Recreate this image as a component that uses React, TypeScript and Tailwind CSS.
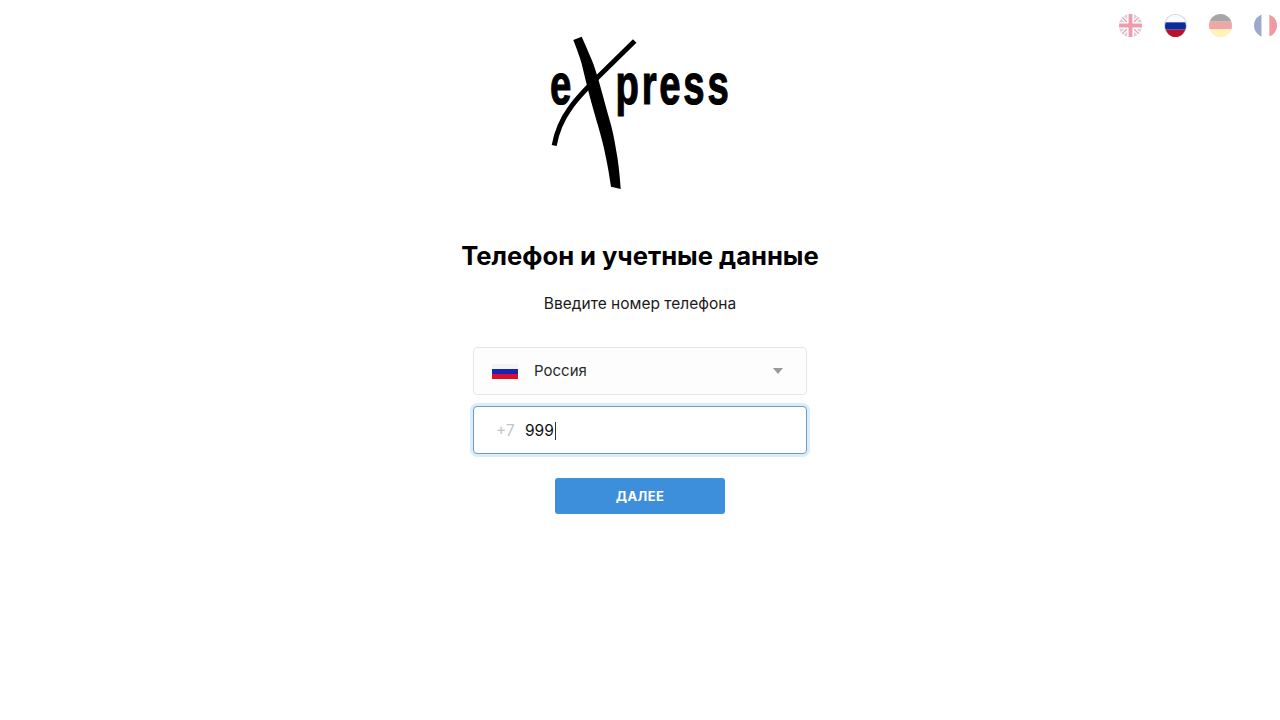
const inter = "font-['Inter',sans-serif]";

function Logo() {
  return (
    <svg width="180" height="155" viewBox="0 0 180 155" className="block overflow-visible">
      {/* Тонкий штрих X */}
      <path d="M84.7 5 L46.7 42.3 C34 55 27 62 20 72.3 C13 82 7 94 4.2 109.5" fill="none" stroke="#000" strokeWidth="5" />
      {/* Буквы */}
      <g fill="#000" stroke="#000" strokeWidth="1.2" fontFamily="'Liberation Sans', sans-serif" fontWeight="700" fontSize="58">
        <text transform="translate(0 68) scale(0.66 1)" x="0" y="0">e</text>
        <text transform="translate(65.5 68) scale(0.66 1)" x="0" y="0" letterSpacing="4.2">press</text>
      </g>
      {/* Толстый штрих X */}
      <path d="M23.3 4 L31.7 0.7 C35 8 38 15 41 22.3 C44.5 30 46.5 38 49 45.7 C53 60 57 75 61 89 C64 100 65.5 111 67.5 122 C69 132 70 143 70.7 153 L61 150.7 C59.5 141 58 131 56 122 C54 111 51 100 47.8 89 C43.5 74 39.5 60 36 45.7 C34 38 32.5 30 30 22.3 C28 16 25.5 10 23.3 4 Z" fill="#000" />
    </svg>
  );
}

function FlagUk() {
  return (
    <svg viewBox="0 0 24 24" className="h-full w-full">
      <rect width="24" height="24" fill="#8b93ad" />
      <path d="M0 0 L24 24 M24 0 L0 24" stroke="#fff" strokeWidth="4" />
      <path d="M0 0 L24 24 M24 0 L0 24" stroke="#d5102f" strokeWidth="1.4" />
      <path d="M12 0 V24 M0 12 H24" stroke="#fff" strokeWidth="7" />
      <path d="M12 0 V24 M0 12 H24" stroke="#d5102f" strokeWidth="4" />
    </svg>
  );
}

function Stripes({ colors, vertical }: { colors: string[]; vertical?: boolean }) {
  const size = 24 / colors.length;
  return (
    <svg viewBox="0 0 24 24" className="h-full w-full" preserveAspectRatio="none">
      {colors.map((c, i) =>
        vertical ? (
          <rect key={c} x={i * size} y="0" width={size} height="24" fill={c} />
        ) : (
          <rect key={c} x="0" y={i * size} width="24" height={size} fill={c} />
        ),
      )}
    </svg>
  );
}

function LangFlags() {
  return (
    <div className="flex items-start justify-end gap-[22px] pt-[14px] pr-[3px]">
      <div className="h-[23px] w-[23px] overflow-hidden rounded-full opacity-40">
        <FlagUk />
      </div>
      <div className="h-[23px] w-[23px] overflow-hidden rounded-full border border-[#d8d8d8] border-b-0">
        <Stripes colors={["#fafafa", "#0b2c9c", "#b8102e"]} />
      </div>
      <div className="h-[23px] w-[23px] overflow-hidden rounded-full opacity-40">
        <Stripes colors={["#222222", "#dd2222", "#ffe24d"]} />
      </div>
      <div className="h-[23px] w-[23px] overflow-hidden rounded-full opacity-40">
        <Stripes vertical colors={["#0a2a7c", "#ffffff", "#e1001a"]} />
      </div>
    </div>
  );
}

export default function App() {
  return (
    <div className={`min-h-screen bg-white text-black ${inter}`}>
      <div className="grid grid-cols-[1fr_180px_1fr]">
        <div />
        <div className="pt-9">
          <Logo />
        </div>
        <LangFlags />
      </div>

      <div className="flex flex-col items-center">
        <h1 className="mt-[47px] text-[25.6px] leading-[36px] font-bold">Телефон и учетные данные</h1>
        <p className="mt-[19px] text-[15.5px] leading-[22px] text-[#1a1a1a]">Введите номер телефона</p>

        {/* Страна */}
        <div className="mt-[32px] flex h-12 w-[334px] items-center rounded-[4px] border border-[#e6e6e6] bg-[#fdfdfd] pr-[23px] pl-[18px]">
          <div className="flex h-[15px] w-[26px] flex-col">
            <div className="h-[5px] bg-[#f5f5f5]" />
            <div className="h-[5px] bg-[#1a22b8]" />
            <div className="h-[5px] bg-[#d8102a]" />
          </div>
          <span className="ml-4 text-[15px] text-[#2a2a2a]">Россия</span>
          <div className="ml-auto h-0 w-0 border-x-[5px] border-t-[6px] border-x-transparent border-t-[#9a9a9a]" />
        </div>

        {/* Номер */}
        <div className="mt-[11px] flex h-12 w-[334px] items-center rounded-[4px] border border-[#6f9cc4] bg-white pt-px pl-[22px] text-[15.5px] shadow-[0_0_0_3px_#dcedfa]">
          <span className="w-[29px] text-[#c4c4c4]">+7</span>
          <span className="text-[#111]">999</span>
          <span className="ml-px h-[18px] w-px bg-[#333]" />
        </div>

        <button className="mt-6 h-9 w-[170px] rounded-[3px] bg-[#3d8fdb] pt-px text-[13px] font-bold tracking-[0.03em] text-white">
          ДАЛЕЕ
        </button>
      </div>
    </div>
  );
}
